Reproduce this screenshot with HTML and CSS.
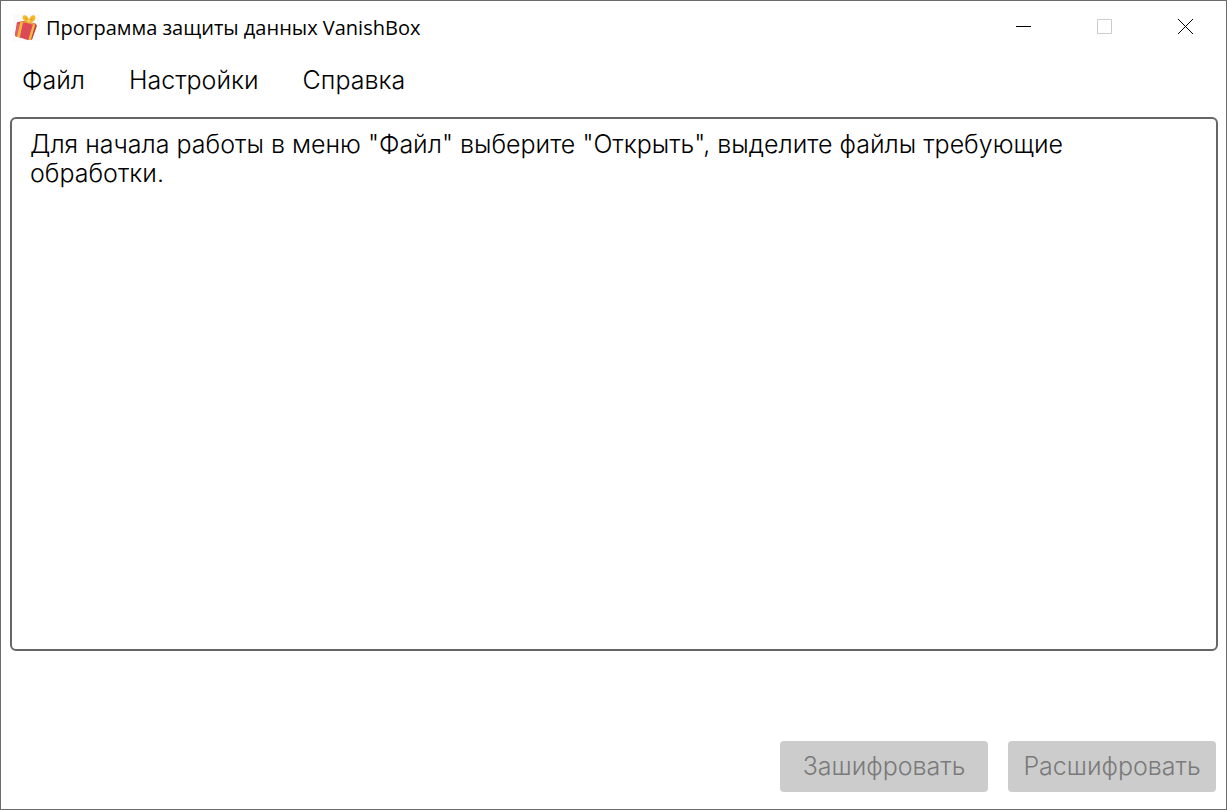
FILE: index.html
```
<!DOCTYPE html>
<html lang="ru">
<head>
<meta charset="utf-8">
<title>Программа защиты данных VanishBox</title>
<link rel="stylesheet" href="styles.css">
</head>
<body>
<div class="window">
  <header class="titlebar">
    <svg class="logo" viewBox="0 0 81 81" aria-hidden="true">
      <path d="M0 0H81V81H0Z" fill="#fafafa"/>
      <path d="M12 25L35 20L69 29L71 36L55 78L44 78L6 66L6 60Z" fill="#dc4a59"/>
      <path d="M12 29L21 31L12 68L6 66Z" fill="#e0606a"/>
      <path d="M22 24L30 25L20 71L12 68Z" fill="#f3b93c"/>
      <path d="M60 30L67 32L54 78L46 77Z" fill="#f3b93c"/>
      <path d="M68 31L71 36L58 74L54 78Z" fill="#b93743"/>
      <path d="M22 24L42 21L67 31L60 32L40 26L30 27Z" fill="#e9a531"/>
      <path d="M45 23C27 22 26 7 33 4C40 1 46 10 48 17C51 4 64 0 67 8C69 17 61 26 48 25Z" fill="#f2ba2d"/>
      <path d="M43 18C39 17 37 14 37 12C40 12 42 14 43 18ZM52 19C54 15 58 13 60 13C60 16 56 19 52 19Z" fill="#d9991f"/>
      <path d="M42 18L51 18L52 25L43 26Z" fill="#fbd052"/>
    </svg>
    <h1 class="title">Программа защиты данных VanishBox</h1>
    <div class="controls">
      <button class="control" aria-label="Свернуть"><svg viewBox="0 0 16 16"><path d="M0 7.5H15"/></svg></button>
      <button class="control" aria-label="Развернуть" disabled><svg viewBox="0 0 16 16"><path d="M.5 .5H14.5V14.5H.5Z"/></svg></button>
      <button class="control" aria-label="Закрыть"><svg viewBox="0 0 16 16"><path d="M0 0L15 15M15 0L0 15"/></svg></button>
    </div>
  </header>
  <nav class="menu">
    <button class="menu-item">Файл</button>
    <button class="menu-item">Настройки</button>
    <button class="menu-item">Справка</button>
  </nav>
  <main class="content">
    <textarea class="log" aria-label="Сообщения" readonly>Для начала работы в меню "Файл" выберите "Открыть", выделите файлы требующие обработки.</textarea>
  </main>
  <footer class="actions">
    <button class="action" disabled>Зашифровать</button>
    <button class="action" disabled>Расшифровать</button>
  </footer>
</div>
</body>
</html>
```
FILE: styles.css
```
* { box-sizing: border-box; }
body { margin: 0; background: #fff; color: #000; font-family: Inter, sans-serif; font-weight: 300; }
button, textarea { font: inherit; color: inherit; }
.window { display: flex; flex-direction: column; min-height: 100vh; border: 1px solid #6b6b6b; }
.titlebar { display: flex; align-items: center; height: 52px; padding-left: 12px; }
.logo { width: 27px; height: 27px; }
.title { flex: 1; margin: 0 0 0 6px; padding-top: 2px; font: 400 20px/28px "Open Sans", sans-serif; }
.controls { display: flex; align-self: stretch; }
.control { display: flex; align-items: center; justify-content: center; width: 81px; padding: 0; border: 0; background: none; }
.control svg { width: 16px; height: 16px; fill: none; stroke: #000; }
.control:disabled svg { stroke: #ccc; }
.menu { display: flex; gap: 2px; height: 54px; }
.menu-item { padding: 0 21px; border: 0; background: none; font-size: 25px; line-height: 30px; }
.content { display: flex; flex: 1; padding: 10px 8px 0 9px; }
.log { flex: 1; padding: 11px 18px; border: 2px solid #666; border-radius: 6px; background: #fff; font-size: 25px; line-height: 29px; resize: none; outline: 0; }
.actions { display: flex; justify-content: flex-end; gap: 20px; padding: 90px 10px 17px; }
.action { width: 208px; height: 51px; padding: 0 0 2px; border: 0; border-radius: 4px; background: #ccc; color: #7a7a7a; font-size: 25px; }
```
